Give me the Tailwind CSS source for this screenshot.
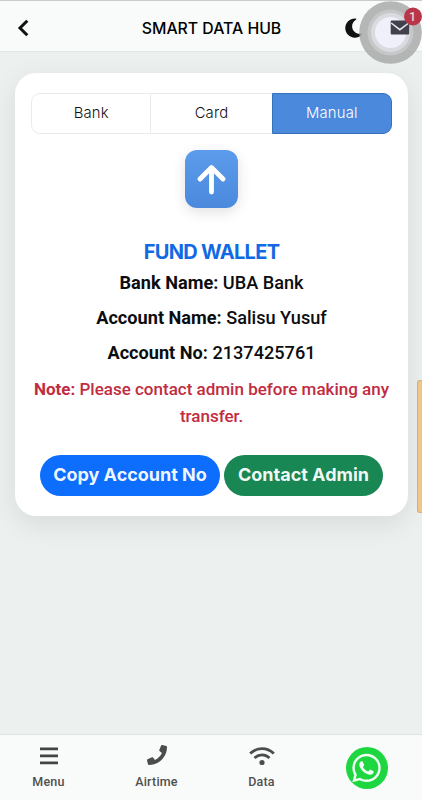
<!DOCTYPE html>
<html lang="en">

<head>
  <meta charset="UTF-8">
  <meta name="viewport" content="width=device-width, initial-scale=1.0">
  <title>Smart Data Hub</title>
  <script src="https://cdn.jsdelivr.net/npm/@tailwindcss/browser@4"></script>
</head>

<body class="bg-[#ecf1f0] font-[Roboto,sans-serif] text-[#0c0d10]">
  <div class="relative flex flex-col h-[800px] overflow-hidden">

    <!-- Header -->
    <header class="flex items-center h-[52px] shrink-0 pt-[3px] pl-[17px] pr-3 bg-[#f9fbfb] border-t border-b border-t-[#c9cbcb] border-b-[#e3e6e6]">
      <button class="w-[60px]">
        <svg class="w-3 h-[18px]" viewBox="0 0 12 18" fill="none" stroke="#111" stroke-width="3"><path d="M10.3 1.7 3 9l7.3 7.3" /></svg>
      </button>
      <h1 class="flex-1 pt-[2px] pl-[1px] text-center whitespace-nowrap font-[Inter,sans-serif] font-medium text-[15.8px] text-black">SMART DATA HUB</h1>
      <div class="flex items-center justify-end w-[65px] pr-[48px]">
        <svg class="w-[17px] h-[22px] shrink-0" viewBox="0 0 384 512" fill="#111"><path d="M223.5 32C100 32 0 132.3 0 256S100 480 223.5 480c60.6 0 115.5-24.2 155.8-63.4c5-4.9 6.3-12.5 3.1-18.7s-10.1-9.7-17-8.5c-9.8 1.7-19.8 2.6-30.1 2.6c-96.9 0-175.5-78.8-175.5-176c0-65.8 36-123.1 89.3-153.3c6.1-3.5 9.2-10.5 7.7-17.3s-7.3-11.9-14.3-12.5c-6.3-.5-12.6-.8-19-.8z" /></svg>
      </div>
    </header>

    <!-- Fund wallet card -->
    <main class="flex-1 px-[15px] pr-[14px] pt-[21px]">
      <section class="h-[443px] px-4 pt-5 bg-white rounded-[21px] shadow-[0_8px_28px_rgba(0,0,0,0.09)]">
        <div class="grid grid-cols-3 h-[41px] font-[Inter,sans-serif] font-light text-[14.8px] tracking-[0.2px] text-[#111]">
          <button class="border border-[#e9ebed] rounded-l-[9px]">Bank</button>
          <button class="border-y border-[#e9ebed]">Card</button>
          <button class="bg-[#4a89dc] border border-[#3672b8] text-white rounded-r-[9px]">Manual</button>
        </div>

        <div class="flex items-center justify-center w-[53px] h-[58px] mt-4 mx-auto rounded-[12px] bg-linear-to-b from-[#5d9cec] to-[#4a89dc] shadow-[0_4px_14px_rgba(0,0,0,0.12)]">
          <svg class="w-[29px] h-[31px]" viewBox="0 0 29 31" fill="none" stroke="#fff" stroke-width="4.8" stroke-linecap="round" stroke-linejoin="round"><path d="M14.5 28V4M3 15 14.5 3.5 26 15" /></svg>
        </div>

        <div class="text-center whitespace-nowrap">
          <h2 class="mt-[31px] leading-[26px] font-[Inter,sans-serif] font-bold text-[20px] tracking-[-0.68px] text-[#1269e4]">FUND WALLET</h2>
          <p class="mt-[3px] leading-[30px] font-medium text-[18.15px]"><b>Bank Name:</b> UBA Bank</p>
          <p class="mt-[5px] leading-[30px] font-medium text-[18.15px]"><b>Account Name:</b> Salisu Yusuf</p>
          <p class="mt-[5px] leading-[30px] font-medium text-[18.15px]"><b>Account No:</b> 2137425761</p>
          <p class="mt-2 leading-[27px] font-medium text-[17px] text-[#c02c40]"><b>Note:</b> Please contact admin before making any<br>transfer.</p>
        </div>

        <div class="flex justify-center gap-1 mt-[25px] whitespace-nowrap font-[Inter,sans-serif] font-bold text-[18px] text-white/95">
          <button class="w-[180px] h-[41px] pb-[2px] rounded-full bg-[#0d6efd]">Copy Account No</button>
          <button class="w-[159px] h-[41px] pb-[2px] rounded-full bg-[#198754]">Contact Admin</button>
        </div>
      </section>
    </main>

    <!-- Bottom navigation -->
    <nav class="flex h-[66px] shrink-0 bg-[#f9fbfb] border-t border-[#e2e5e5] text-[12.5px] tracking-[0.2px] text-[#505050] font-medium">
      <a class="flex flex-col items-center shrink-0 w-[97px] pt-[11px]">
        <svg class="w-[18px] h-[20px]" viewBox="0 0 18 20" fill="#444"><path d="M0 2h18v2.8H0zM0 9h18v2.8H0zM0 16h18v2.8H0z" transform="translate(0 -.5)" /></svg>
        <span class="mt-[6px] leading-5">Menu</span>
      </a>
      <a class="flex flex-col items-center shrink-0 w-[119px] pt-[10px]">
        <svg class="w-[20px] h-[20px]" viewBox="0 0 512 512" fill="#4c4c4c"><path d="M493.4 24.6l-104-24c-11.3-2.6-22.9 3.3-27.5 13.9l-48 112c-4.2 9.8-1.4 21.3 6.9 28l60.6 49.6c-36 76.7-98.9 140.5-177.2 177.2l-49.6-60.6c-6.8-8.3-18.2-11.1-28-6.9l-112 48C3.9 366.5-2 378.1.6 389.4l24 104C27.1 504.2 36.7 512 48 512c256.1 0 464-207.5 464-464 0-11.2-7.7-20.9-18.6-23.4z" /></svg>
        <span class="mt-[7px] leading-5">Airtime</span>
      </a>
      <a class="flex flex-col items-center shrink-0 w-[91px] pt-[11px]">
        <svg class="w-[26px] h-[20px]" viewBox="0 0 26 20" fill="none" stroke="#4c4c4c" stroke-width="2.8"><path d="M1.2 7.6c6.8-6.6 16.8-6.6 23.6 0M5.5 12c4.5-4.1 10.5-4.1 15 0" /><circle cx="13" cy="16.5" r="2.6" fill="#4c4c4c" stroke="none" /></svg>
        <span class="mt-[6px] leading-5">Data</span>
      </a>
      <a class="flex flex-col items-center shrink-0 w-[119px] pt-3">
        <span class="flex items-center justify-center size-[42px] rounded-full bg-[#1ed740]">
          <svg class="w-[29px] h-[30px]" viewBox="0 20 448 472" fill="#f4fff6"><path d="M380.9 97.1C339 55.1 283.2 32 223.9 32c-122.4 0-222 99.6-222 222 0 39.1 10.2 77.3 29.6 111L0 480l117.7-30.9c32.4 17.7 68.9 27 106.1 27h.1c122.3 0 224.1-99.6 224.1-222 0-59.3-25.2-115-67.1-157zm-157 341.6c-33.2 0-65.7-8.9-94-25.7l-6.7-4-69.8 18.3L72 359.2l-4.4-7c-18.5-29.4-28.2-63.3-28.2-98.2 0-101.7 82.8-184.5 184.6-184.5 49.3 0 95.6 19.2 130.4 54.1 34.8 34.9 56.2 81.2 56.1 130.5 0 101.8-84.9 184.6-186.6 184.6zm101.2-138.2c-5.5-2.8-32.8-16.2-37.9-18-5.1-1.9-8.8-2.8-12.5 2.8-3.7 5.6-14.3 18-17.6 21.8-3.2 3.7-6.5 4.2-12 1.4-32.6-16.3-54-29.1-75.5-66-5.7-9.8 5.7-9.1 16.3-30.3 1.8-3.7.9-6.9-.5-9.7-1.4-2.8-12.5-30.1-17.1-41.2-4.5-10.8-9.1-9.3-12.5-9.5-3.2-.2-6.9-.2-10.6-.2-3.7 0-9.7 1.4-14.8 6.9-5.1 5.6-19.4 19-19.4 46.3 0 27.3 19.9 53.7 22.6 57.4 2.8 3.7 39.1 59.7 94.8 83.8 35.2 15.2 49 16.5 66.6 13.9 10.7-1.6 32.8-13.4 37.4-26.4 4.6-13 4.6-24.1 3.2-26.4-1.3-2.5-5-3.9-10.5-6.6z" /></svg>
        </span>
      </a>
    </nav>

    <!-- Floating assistive button over the messages icon -->
    <svg class="absolute left-[359px] top-0 w-[63px] h-[66px]" viewBox="0 0 63 66">
      <circle cx="31.5" cy="32.5" r="31.3" fill="#a8aaa9" fill-opacity=".85" />
      <circle cx="31.5" cy="32.5" r="23" fill="#c6c7c9" />
      <circle cx="31.5" cy="32.5" r="19.5" fill="#dadbe0" />
      <circle cx="31.5" cy="32.5" r="15.5" fill="#eff0fa" />
      <rect x="31.7" y="20.5" width="18.5" height="14" rx="1" fill="#40414a" />
      <path d="m32.2 23 8.7 6.7 8.8-6.7" fill="none" stroke="#e8e9f2" stroke-width="1.5" />
      <circle cx="54" cy="16.5" r="9" fill="#bb3548" />
      <text x="53.5" y="21" text-anchor="middle" font-family="Roboto" font-size="12.5" font-weight="500" fill="#ddd">1</text>
    </svg>

    <!-- Edge panel handle -->
    <div class="absolute right-0 top-[380px] w-[5px] h-[133px] rounded-l-[3px] bg-[#edc88a] border border-r-0 border-[#d5b078]"></div>
  </div>
</body>

</html>
